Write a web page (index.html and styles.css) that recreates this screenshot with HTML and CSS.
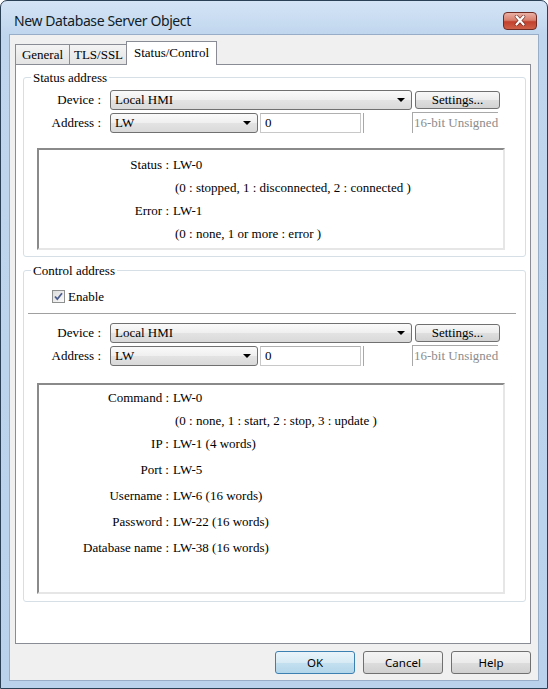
FILE: index.html
```html
<!DOCTYPE html>
<html lang="en">
<head>
    <meta charset="UTF-8">
    <title>New Database Server Object</title>
    <link rel="stylesheet" href="styles.css">
</head>
<body>
    <div class="window">
        <div class="titlebar">
            <span class="title">New Database Server Object</span>
            <button class="close-btn">
                <svg width="14" height="11" viewBox="0 0 14 11">
                    <path d="M3.5 1.5 L10.5 9.5 M10.5 1.5 L3.5 9.5" stroke="#5b1d16" stroke-width="3.6" stroke-linecap="round" opacity="0.7"/>
                    <path d="M3.5 1.5 L10.5 9.5 M10.5 1.5 L3.5 9.5" stroke="#ffffff" stroke-width="2.2" stroke-linecap="round"/>
                </svg>
            </button>
        </div>

        <div class="client">
            <div class="tabs">
                <div class="tab tab-general">General</div>
                <div class="tab tab-tls">TLS/SSL</div>
                <div class="tab tab-status selected">Status/Control</div>
            </div>

            <div class="tab-panel">
                <!-- 状态地址 -->
                <fieldset class="group status-group">
                    <legend>Status address</legend>
                    <div class="field-row first-row">
                        <label class="field-label">Device :</label>
                        <div class="combo device-combo"><span>Local HMI</span><i class="arrow"></i></div>
                        <button class="btn-settings">Settings...</button>
                    </div>
                    <div class="field-row addr-row">
                        <label class="field-label">Address :</label>
                        <div class="combo addr-combo"><span>LW</span><i class="arrow"></i></div>
                        <input class="addr-input" type="text" value="0">
                        <span class="addr-sep"></span>
                        <span class="data-type">16-bit Unsigned</span>
                    </div>
                    <div class="info-box status-info">
                        <div class="info-line"><span class="info-key">Status :</span><span class="info-value">LW-0</span></div>
                        <div class="info-line"><span class="info-key"></span><span class="info-value sub">(0 : stopped, 1 : disconnected, 2 : connected )</span></div>
                        <div class="info-line"><span class="info-key">Error :</span><span class="info-value">LW-1</span></div>
                        <div class="info-line"><span class="info-key"></span><span class="info-value sub">(0 : none, 1 or more : error )</span></div>
                    </div>
                </fieldset>

                <!-- 控制地址 -->
                <fieldset class="group control-group">
                    <legend>Control address</legend>
                    <div class="enable-row">
                        <span class="checkbox">
                            <svg width="11" height="11" viewBox="0 0 11 11">
                                <path d="M2 5.5 L4.3 8.2 L9 2.3" fill="none" stroke="#4a5d8e" stroke-width="1.8"/>
                            </svg>
                        </span>
                        <span class="enable-text">Enable</span>
                    </div>
                    <div class="separator"></div>
                    <div class="field-row device-row-2">
                        <label class="field-label">Device :</label>
                        <div class="combo device-combo"><span>Local HMI</span><i class="arrow"></i></div>
                        <button class="btn-settings">Settings...</button>
                    </div>
                    <div class="field-row addr-row">
                        <label class="field-label">Address :</label>
                        <div class="combo addr-combo"><span>LW</span><i class="arrow"></i></div>
                        <input class="addr-input" type="text" value="0">
                        <span class="addr-sep"></span>
                        <span class="data-type">16-bit Unsigned</span>
                    </div>
                    <div class="info-box control-info">
                        <div class="info-line"><span class="info-key">Command :</span><span class="info-value">LW-0</span></div>
                        <div class="info-line"><span class="info-key"></span><span class="info-value sub">(0 : none, 1 : start, 2 : stop, 3 : update )</span></div>
                        <div class="info-line"><span class="info-key">IP :</span><span class="info-value">LW-1 (4 words)</span></div>
                        <div class="info-line spaced"><span class="info-key">Port :</span><span class="info-value">LW-5</span></div>
                        <div class="info-line spaced"><span class="info-key">Username :</span><span class="info-value">LW-6 (16 words)</span></div>
                        <div class="info-line spaced"><span class="info-key">Password :</span><span class="info-value">LW-22 (16 words)</span></div>
                        <div class="info-line spaced"><span class="info-key">Database name :</span><span class="info-value">LW-38 (16 words)</span></div>
                    </div>
                </fieldset>
            </div>

            <div class="dialog-buttons">
                <button class="dialog-btn default">OK</button>
                <button class="dialog-btn">Cancel</button>
                <button class="dialog-btn">Help</button>
            </div>
        </div>
    </div>
</body>
</html>
```

FILE: styles.css
```css
/* 重置样式 */
* {
    margin: 0;
    padding: 0;
    box-sizing: border-box;
}

body {
    width: 548px;
    height: 689px;
    background: #ffffff;
    font-family: 'Liberation Serif', 'Times New Roman', serif;
    font-size: 13px;
    color: #000;
}

/* 窗口外框 */
.window {
    width: 548px;
    height: 689px;
    border: 1px solid #2b3f55;
    border-radius: 7px 7px 0 0;
    background: linear-gradient(#d4e4f5, #c0d6ee 34px, #bad2ec);
    display: flex;
    flex-direction: column;
}

/* 标题栏 */
.titlebar {
    height: 33px;
    display: flex;
    align-items: center;
    justify-content: space-between;
    padding: 6px 10px 0 13px;
}

.title {
    font-family: 'Noto Sans', sans-serif;
    font-size: 14px;
    letter-spacing: -0.4px;
    color: #111c28;
}

.close-btn {
    width: 34px;
    height: 18px;
    border: 1px solid #6e2b24;
    border-radius: 4px;
    background: linear-gradient(#eab0a4, #d8806f 45%, #c2402e 55%, #cf6149);
    display: flex;
    align-items: center;
    justify-content: center;
}

/* 客户区 */
.client {
    flex: 1;
    margin: 0 8px 7px;
    border: 1px solid #98aec8;
    background: #f0f0f0;
    padding: 6px 0 0 5px;
}

/* 选项卡 */
.tabs {
    display: flex;
    align-items: flex-end;
    height: 23px;
}

.tab {
    height: 20px;
    border: 1px solid #898c95;
    border-bottom: none;
    background: linear-gradient(#f4f4f4, #e4e4e4);
    text-align: center;
    line-height: 19px;
}

.tab + .tab {
    margin-left: -1px;
}

.tab-general {
    width: 55px;
}

.tab-tls {
    width: 59px;
}

.tab.selected {
    width: 91px;
    height: 24px;
    margin-left: -2px;
    margin-bottom: -1px;
    background: #ffffff;
    position: relative;
    z-index: 1;
    line-height: 22px;
}

.tab-panel {
    width: 516px;
    height: 580px;
    border: 1px solid #898c95;
    background: #ffffff;
    padding: 5px 0 0 7px;
}

/* 分组框 */
.group {
    width: 503px;
    border: 1px solid #d5dfe5;
    border-radius: 3px;
}

.group legend {
    margin-left: 7px;
    padding: 0 2px;
    line-height: 15px;
}

.status-group {
    padding-bottom: 6px;
}

.control-group {
    margin-top: 6px;
    padding-bottom: 7px;
}

/* 设备与地址行 */
.field-row {
    display: flex;
    align-items: center;
    height: 20px;
}

.first-row {
    margin-top: 5px;
}

.addr-row {
    margin-top: 3px;
}

.device-row-2 {
    margin-top: 8px;
}

.field-label {
    width: 77px;
    margin-right: 9px;
    text-align: right;
}

.combo {
    height: 20px;
    border: 1px solid #707070;
    border-radius: 3px;
    background: linear-gradient(#fafafa, #efefef 50%, #e3e3e3 52%, #d9d9d9);
    display: flex;
    align-items: center;
    justify-content: space-between;
    padding: 0 6px 0 4px;
}

.device-combo {
    width: 302px;
}

.addr-combo {
    width: 148px;
}

.arrow {
    width: 0;
    height: 0;
    border-left: 4px solid transparent;
    border-right: 4px solid transparent;
    border-top: 4px solid #000;
}

.btn-settings {
    width: 85px;
    height: 18px;
    margin-left: 3px;
    border: 1px solid #707070;
    border-radius: 3px;
    background: linear-gradient(#f8f8f8, #ececec 50%, #dedede 52%, #d2d2d2);
    font-family: inherit;
    font-size: 13px;
    line-height: 16px;
}

.addr-input {
    width: 101px;
    height: 20px;
    margin-left: 2px;
    border: 1px solid #c8c8c8;
    border-top-color: #b0b0b0;
    padding: 0 4px;
    font-family: inherit;
    font-size: 13px;
    outline: none;
}

.addr-sep {
    width: 1px;
    height: 20px;
    margin-left: 2px;
    background: #a8a8a8;
}

.data-type {
    align-self: flex-start;
    width: 86px;
    height: 21px;
    margin-top: -1px;
    margin-left: 48px;
    border-top: 1px solid #a8a8a8;
    border-left: 1px solid #a8a8a8;
    padding-left: 1px;
    color: #8c8c8c;
    line-height: 19px;
    white-space: nowrap;
}

/* 启用复选框 */
.enable-row {
    display: flex;
    align-items: center;
    height: 13px;
    margin: 12px 0 0 28px;
}

.checkbox {
    width: 13px;
    height: 13px;
    border: 1px solid #8e8f8f;
    background: linear-gradient(135deg, #dcdcdc, #fbfbfb);
    display: flex;
    align-items: center;
    justify-content: center;
}

.enable-text {
    margin-left: 3px;
}

.separator {
    width: 488px;
    height: 2px;
    margin: 10px 0 0 4px;
    border-top: 1px solid #a0a0a0;
    border-bottom: 1px solid #ffffff;
}

/* 地址说明框 */
.info-box {
    width: 468px;
    margin-left: 13px;
    border: 2px solid;
    border-color: #8a8a8a #e6e6e6 #e6e6e6 #8a8a8a;
    background: #ffffff;
}

.status-info {
    height: 102px;
    margin-top: 15px;
    padding-top: 3px;
}

.control-info {
    height: 211px;
    margin-top: 17px;
    padding-top: 1px;
}

.info-line {
    display: flex;
    line-height: 23px;
    white-space: nowrap;
}

.info-line.spaced {
    margin-top: 3px;
}

.info-key {
    width: 130px;
    text-align: right;
}

.info-value {
    margin-left: 4px;
}

.info-value.sub {
    padding-left: 2px;
}

/* 底部按钮 */
.dialog-buttons {
    width: 516px;
    margin-top: 7px;
    display: flex;
    justify-content: flex-end;
    gap: 8px;
}

.dialog-btn {
    width: 80px;
    height: 23px;
    border: 1px solid #707070;
    border-radius: 3px;
    background: linear-gradient(#f4f4f4, #ebebeb 50%, #dddddd 52%, #d0d0d0);
    font-family: 'Noto Sans', sans-serif;
    font-size: 11.5px;
    color: #000;
}

.dialog-btn.default {
    border-color: #3c7fb1;
    background: linear-gradient(#e9f4fa, #d8ebf5 50%, #c3e0ef 52%, #b3d6ea);
}
```
